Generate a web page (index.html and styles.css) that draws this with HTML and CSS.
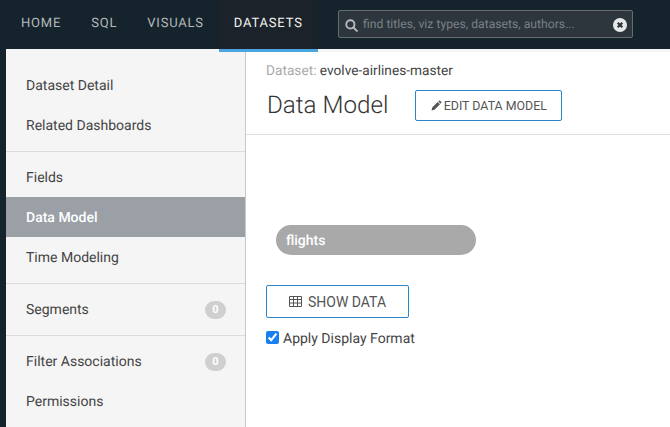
FILE: index.html
```
<!DOCTYPE html>
<html lang="en">
<head>
<meta charset="utf-8">
<title>Data Model</title>
<link rel="stylesheet" href="styles.css">
</head>
<body>
<header class="topbar">
  <nav class="tabs">
    <a class="tab">HOME</a>
    <a class="tab">SQL</a>
    <a class="tab">VISUALS</a>
    <a class="tab tab-active">DATASETS</a>
  </nav>
  <div class="search">
    <svg class="search-icon" viewBox="0 0 14 14" width="13" height="13"><circle cx="5.8" cy="5.8" r="4.4" fill="none" stroke="#b9bcbe" stroke-width="2"/><path d="M9 9l3.8 3.8" stroke="#b9bcbe" stroke-width="2.2" stroke-linecap="round"/></svg>
    <span class="search-text">find titles, viz types, datasets, authors...</span>
    <svg class="search-clear" viewBox="0 0 14 14" width="14" height="14"><circle cx="7" cy="7" r="7" fill="#e6e7e8"/><path d="M4.7 4.7l4.6 4.6M9.3 4.7l-4.6 4.6" stroke="#2c353c" stroke-width="2.2"/></svg>
  </div>
</header>
<div class="body">
  <aside class="sidebar">
    <ul class="group">
      <li class="item">Dataset Detail</li>
      <li class="item">Related Dashboards</li>
    </ul>
    <ul class="group">
      <li class="item">Fields</li>
      <li class="item item-active">Data Model</li>
      <li class="item">Time Modeling</li>
    </ul>
    <ul class="group">
      <li class="item">Segments<span class="badge">0</span></li>
    </ul>
    <ul class="group">
      <li class="item">Filter Associations<span class="badge">0</span></li>
      <li class="item">Permissions</li>
    </ul>
  </aside>
  <main class="main">
    <div class="head">
      <div class="crumb"><span class="crumb-label">Dataset:</span> evolve-airlines-master</div>
      <div class="title-row">
        <h1 class="title">Data Model</h1>
        <button class="btn btn-edit">
          <svg class="pencil" viewBox="0 0 12 12" width="11" height="11"><path d="M0.6 11.4l0.7-3.2 6-6 2.5 2.5-6 6zM8 1.6l0.9-0.9q0.5-0.5 1 0l1.4 1.4q0.5 0.5 0 1l-0.9 0.9z" fill="#555"/></svg>EDIT DATA MODEL
        </button>
      </div>
    </div>
    <div class="content">
      <div class="pill">flights</div>
      <button class="btn btn-show">
        <svg class="grid-icon" viewBox="0 0 13 11" width="13" height="11"><path d="M0.5 0.5h12v10h-12zM0.5 3.5h12M0.5 7h12M4.5 0.5v10M8.5 0.5v10" fill="none" stroke="#555" stroke-width="1"/></svg>SHOW DATA
      </button>
      <label class="check"><input type="checkbox" class="check-box" checked><span class="check-text">Apply Display Format</span></label>
    </div>
  </main>
</div>
</body>
</html>
```
FILE: styles.css
```
* { box-sizing: border-box; }
html, body { margin: 0; height: 100%; }
body {
  width: 670px;
  height: 427px;
  overflow: hidden;
  background: #15232c;
  font-family: Roboto, "Liberation Sans", sans-serif;
  color: #444;
  text-rendering: geometricPrecision;
}
.topbar {
  height: 49px;
  display: flex;
  align-items: stretch;
  position: relative;
}
.tabs { display: flex; padding-left: 6px; }
.tab {
  font-size: 13px;
  letter-spacing: 0.8px;
  color: #b4b8bb;
  padding: 16px 15px 0;
}
.tab-active {
  background: #1c2229;
  color: #f0f1f2;
  box-shadow: 0 3px 0 #4ba6e0;
  position: relative;
  z-index: 1;
}
.search {
  position: absolute;
  left: 338px;
  top: 10px;
  width: 295px;
  height: 28px;
  background: #2e363d;
  border: 1px solid #666c70;
  border-radius: 2px;
  display: flex;
  align-items: center;
  padding: 0 5px 0 6px;
}
.search-icon { flex: none; margin: 2px 5px 0 0; }
.search-text { font-size: 12.2px; color: #7a8085; flex: 1; white-space: nowrap; }
.search-clear { flex: none; margin-top: 2px; }
.body { display: flex; height: 378px; padding-left: 6px; }
.sidebar {
  width: 240px;
  background: #f5f5f5;
  border-right: 1px solid #c9c9c9;
  padding-top: 16px;
  flex: none;
}
.group { list-style: none; margin: 0 0 5px; padding: 0 0 6px; border-bottom: 1px solid #dcdcdc; }
.group:last-child { border-bottom: 0; }
.item {
  height: 40px;
  line-height: 40px;
  padding: 2px 19px 0 20px;
  font-size: 14px;
  color: #444;
  display: flex;
  justify-content: space-between;
  align-items: center;
}
.item-active { background: #9aa0a5; color: #fff; font-weight: 500; }
.badge {
  width: 21px;
  height: 18px;
  line-height: 18px;
  border-radius: 9px;
  background: #cfcfcf;
  color: #fff;
  font-size: 11px;
  font-weight: 700;
  text-align: center;
}
.main { flex: 1; background: #fff; border-top: 3px solid #f5f5f5; }
.head { height: 83px; padding: 10px 20px 0 21px; border-bottom: 1px solid #e0e0e0; }
.crumb { font-size: 13.7px; line-height: 18px; color: #444; margin-left: -1px; }
.crumb-label { color: #aaa; }
.title-row { display: flex; align-items: center; margin-top: 9px; }
.title { margin: 0; font-size: 24.2px; font-weight: 300; color: #333; line-height: 32px; }
.btn {
  background: #fff;
  border: 1px solid #2a86c8;
  border-radius: 2px;
  color: #555;
  font-family: inherit;
  font-size: 14px;
  display: flex;
  align-items: center;
  justify-content: center;
  padding: 0;
}
.btn-edit { width: 147px; height: 31px; margin-left: 27px; font-size: 12.4px; }
.pencil { margin-right: 2px; }
.content { padding: 90px 20px 0; }
.pill {
  margin-left: 10px;
  width: 200px;
  height: 30px;
  line-height: 32px;
  border-radius: 15px;
  background: #a9a9a9;
  color: #fff;
  font-size: 14px;
  font-weight: 500;
  padding-left: 10px;
}
.btn-show { width: 143px; height: 33px; margin-top: 30px; }
.grid-icon { margin-right: 6px; }
.check { display: flex; align-items: center; margin-top: 10px; font-size: 14px; color: #444; line-height: 18px; }
.check-box { margin: 0 4px 2px 0; width: 13px; height: 13px; accent-color: #1a7ff0; }
.check-text { padding-top: 2px; }
```
